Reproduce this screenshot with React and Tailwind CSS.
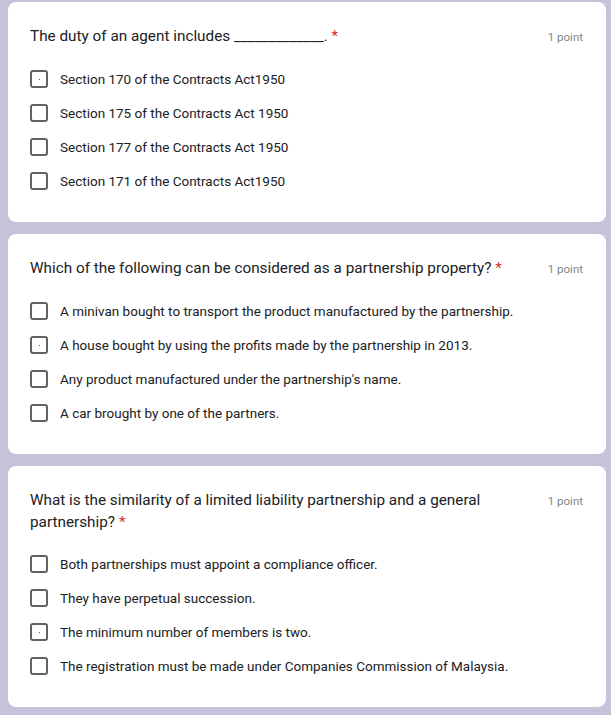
import React from 'react';

const questions = [
    {
        title: 'The duty of an agent includes _____________.',
        options: [
            { label: 'Section 170 of the Contracts Act1950', dot: true },
            { label: 'Section 175 of the Contracts Act 1950' },
            { label: 'Section 177 of the Contracts Act 1950' },
            { label: 'Section 171 of the Contracts Act1950' },
        ],
    },
    {
        title: 'Which of the following can be considered as a partnership property?',
        options: [
            { label: 'A minivan bought to transport the product manufactured by the partnership.' },
            { label: 'A house bought by using the profits made by the partnership in 2013.', dot: true },
            { label: "Any product manufactured under the partnership's name." },
            { label: 'A car brought by one of the partners.' },
        ],
    },
    {
        title: 'What is the similarity of a limited liability partnership and a general partnership?',
        options: [
            { label: 'Both partnerships must appoint a compliance officer.' },
            { label: 'They have perpetual succession.' },
            { label: 'The minimum number of members is two.', dot: true },
            { label: 'The registration must be made under Companies Commission of Malaysia.' },
        ],
    },
];

const Checkbox = ({ dot }) => (
    <div className="w-[18px] h-[18px] border-2 border-[#5f6368] rounded-[3px] flex items-center justify-center shrink-0">
        {dot && <div className="w-[1px] h-[1px] bg-[#5f6368]" />}
    </div>
);

const QuestionCard = ({ q }) => (
    <div className="bg-white rounded-lg pl-[22px] pr-[23px] pt-[23px] pb-[24px]">
        <div className="flex items-start">
            <div className="flex-1 pr-4 text-[15.3px] leading-[22px] text-[#202124]">
                {q.title} <span className="text-[#d93025]">*</span>
            </div>
            <div className="text-[11.5px] leading-[22px] text-[#80868b] pt-[1px]">1 point</div>
        </div>
        <div className="mt-[14px]">
            {q.options.map((o) => (
                <div key={o.label} className="flex items-center gap-3 h-[34px]">
                    <Checkbox dot={o.dot} />
                    <span className="text-[13.5px] text-[#202124]">{o.label}</span>
                </div>
            ))}
        </div>
    </div>
);

const App = () => (
    <div className="min-h-[715px] bg-[#c5c3da] pl-2 pr-[5px] pt-[2px] pb-3 flex flex-col gap-3" style={{ fontFamily: 'Roboto, Arial, sans-serif' }}>
        {questions.map((q) => (
            <QuestionCard key={q.title} q={q} />
        ))}
    </div>
);

export default App;
